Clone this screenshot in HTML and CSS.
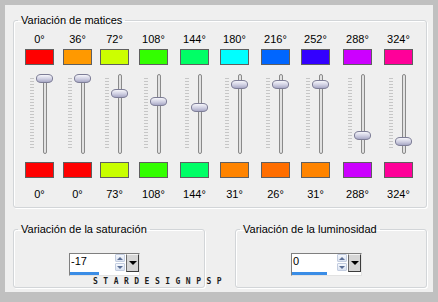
FILE: index.html
```html
<!DOCTYPE html>
<html lang="es">
<head>
    <meta charset="UTF-8">
    <title>Variación de matices</title>
    <link rel="stylesheet" href="styles.css">
</head>
<body>

    <div class="window">
        <div class="panel">

            <!-- Hue shift -->
            <fieldset class="group hue-group">
                <legend>Variación de matices</legend>
                <div class="hue-grid">
                    <div class="hue-col">
                        <span class="deg">0°</span>
                        <div class="swatch" style="background:#ff0000"></div>
                        <div class="slider"><div class="ticks"></div><div class="track"></div><div class="thumb" style="top:0px"></div></div>
                        <div class="swatch" style="background:#ff0000"></div>
                        <span class="deg">0°</span>
                    </div>
                    <div class="hue-col">
                        <span class="deg">36°</span>
                        <div class="swatch" style="background:#ff9900"></div>
                        <div class="slider"><div class="ticks"></div><div class="track"></div><div class="thumb" style="top:0px"></div></div>
                        <div class="swatch" style="background:#ff0000"></div>
                        <span class="deg">0°</span>
                    </div>
                    <div class="hue-col">
                        <span class="deg">72°</span>
                        <div class="swatch" style="background:#ccff00"></div>
                        <div class="slider"><div class="ticks"></div><div class="track"></div><div class="thumb" style="top:15px"></div></div>
                        <div class="swatch" style="background:#c8ff00"></div>
                        <span class="deg">73°</span>
                    </div>
                    <div class="hue-col">
                        <span class="deg">108°</span>
                        <div class="swatch" style="background:#33ff00"></div>
                        <div class="slider"><div class="ticks"></div><div class="track"></div><div class="thumb" style="top:23px"></div></div>
                        <div class="swatch" style="background:#33ff00"></div>
                        <span class="deg">108°</span>
                    </div>
                    <div class="hue-col">
                        <span class="deg">144°</span>
                        <div class="swatch" style="background:#00ff66"></div>
                        <div class="slider"><div class="ticks"></div><div class="track"></div><div class="thumb" style="top:29px"></div></div>
                        <div class="swatch" style="background:#00ff66"></div>
                        <span class="deg">144°</span>
                    </div>
                    <div class="hue-col">
                        <span class="deg">180°</span>
                        <div class="swatch" style="background:#00ffff"></div>
                        <div class="slider"><div class="ticks"></div><div class="track"></div><div class="thumb" style="top:6px"></div></div>
                        <div class="swatch" style="background:#ff8400"></div>
                        <span class="deg">31°</span>
                    </div>
                    <div class="hue-col">
                        <span class="deg">216°</span>
                        <div class="swatch" style="background:#0066ff"></div>
                        <div class="slider"><div class="ticks"></div><div class="track"></div><div class="thumb" style="top:6px"></div></div>
                        <div class="swatch" style="background:#ff6e00"></div>
                        <span class="deg">26°</span>
                    </div>
                    <div class="hue-col">
                        <span class="deg">252°</span>
                        <div class="swatch" style="background:#3300ff"></div>
                        <div class="slider"><div class="ticks"></div><div class="track"></div><div class="thumb" style="top:6px"></div></div>
                        <div class="swatch" style="background:#ff8400"></div>
                        <span class="deg">31°</span>
                    </div>
                    <div class="hue-col">
                        <span class="deg">288°</span>
                        <div class="swatch" style="background:#cc00ff"></div>
                        <div class="slider"><div class="ticks"></div><div class="track"></div><div class="thumb" style="top:57px"></div></div>
                        <div class="swatch" style="background:#cc00ff"></div>
                        <span class="deg">288°</span>
                    </div>
                    <div class="hue-col">
                        <span class="deg">324°</span>
                        <div class="swatch" style="background:#ff0099"></div>
                        <div class="slider"><div class="ticks"></div><div class="track"></div><div class="thumb" style="top:63px"></div></div>
                        <div class="swatch" style="background:#ff0099"></div>
                        <span class="deg">324°</span>
                    </div>
                </div>
            </fieldset>

            <!-- Saturation / lightness -->
            <div class="bottom-row">
                <fieldset class="group small-group">
                    <legend>Variación de la saturación</legend>
                    <div class="spin">
                        <div class="spin-row">
                            <span class="spin-value">-17</span>
                            <div class="spin-arrows">
                                <div class="arrow-btn"><span class="arrow-up"></span></div>
                                <div class="arrow-btn"><span class="arrow-down"></span></div>
                            </div>
                            <div class="drop-btn"><span class="drop-tri"></span></div>
                        </div>
                        <div class="spin-bar" style="width:29px"></div>
                    </div>
                </fieldset>
                <fieldset class="group small-group">
                    <legend>Variación de la luminosidad</legend>
                    <div class="spin">
                        <div class="spin-row">
                            <span class="spin-value">0</span>
                            <div class="spin-arrows">
                                <div class="arrow-btn"><span class="arrow-up"></span></div>
                                <div class="arrow-btn"><span class="arrow-down"></span></div>
                            </div>
                            <div class="drop-btn"><span class="drop-tri"></span></div>
                        </div>
                        <div class="spin-bar" style="width:35px"></div>
                    </div>
                </fieldset>
            </div>

        </div>
        <div class="watermark">STARDESIGNPSP</div>
    </div>

</body>
</html>
```

FILE: styles.css
```css
* {
    box-sizing: border-box;
}

body {
    margin: 0;
    font: 11px/13px "Liberation Sans", Arial, sans-serif;
    color: #000;
}

/* Window frame */
.window {
    position: relative;
    width: 438px;
    height: 302px;
    background: #c0c0c0;
    padding: 5px 5px 10px 5px;
}

.panel {
    height: 100%;
    background: #efefef;
    padding: 9px 5px 4px 8px;
}

/* Group boxes */
.group {
    margin: 0;
    border: 1px solid #d2d5d8;
    border-radius: 3px;
    box-shadow: inset 1px 1px 0 #fff, 1px 1px 0 #fff;
    min-width: 0;
}

.group legend {
    margin-left: 4px;
    padding: 0 3px;
    line-height: 13px;
    white-space: nowrap;
}

.hue-group {
    width: 414px;
    padding: 6px 0 6px 0;
}

.hue-grid {
    display: grid;
    grid-template-columns: 38px 37px 39px 41px 40px 41px 40px 42px 41px 40px;
    margin-left: 11px;
}

.hue-col {
    display: flex;
    flex-direction: column;
    align-items: flex-start;
}

.deg {
    width: 29px;
    text-align: center;
    white-space: nowrap;
    height: 13px;
}

.hue-col .deg:last-child {
    margin-top: 10px;
}

.swatch {
    width: 29px;
    height: 16px;
    border: 1px solid #5f5f5f;
    margin-top: 3px;
}

.slider + .swatch {
    margin-top: 8px;
}

/* Vertical slider */
.slider {
    position: relative;
    width: 29px;
    height: 80px;
    margin-top: 9px;
}

.ticks {
    position: absolute;
    left: 5px;
    top: 4px;
    width: 4px;
    height: 72px;
    background: repeating-linear-gradient(to bottom, #c6c6c6 0 1px, transparent 1px 3px);
}

.track {
    position: absolute;
    left: 18px;
    top: 0;
    width: 4px;
    height: 80px;
    border: 1px solid #8a8a8a;
    border-radius: 2px;
    background: #e2e2e2;
}

.thumb {
    position: absolute;
    left: 11px;
    width: 17px;
    height: 9px;
    border: 1px solid #7d7d96;
    border-radius: 5px / 4px;
    background: linear-gradient(#f6f6fb, #cfcfe2 55%, #a9a9c6);
}

/* Bottom groups */
.bottom-row {
    display: flex;
    gap: 30px;
    margin-top: 15px;
}

.small-group {
    width: 192px;
    padding: 17px 0 11px 0;
}

.spin {
    width: 71px;
    height: 23px;
    margin-left: 55px;
    background: #fff;
    border: 1px solid;
    border-color: #7f7f7f #e2e2e2 #e2e2e2 #7f7f7f;
}

.spin-row {
    display: flex;
    height: 18px;
}

.spin-value {
    width: 45px;
    padding-left: 1px;
    line-height: 14px;
}

.spin-arrows {
    width: 11px;
    display: flex;
    flex-direction: column;
    gap: 1px;
}

.arrow-btn {
    height: 8px;
    width: 10px;
    border: 1px solid #c3cde0;
    border-radius: 1px;
    background: linear-gradient(#f5f8fd, #dbe3f1);
    display: flex;
    align-items: center;
    justify-content: center;
}

.arrow-up {
    border-left: 3px solid transparent;
    border-right: 3px solid transparent;
    border-bottom: 3px solid #5b6f96;
}

.arrow-down {
    border-left: 3px solid transparent;
    border-right: 3px solid transparent;
    border-top: 3px solid #5b6f96;
}

.drop-btn {
    width: 13px;
    height: 18px;
    background: #d6d6d6;
    border: 1px solid;
    border-color: #f4f4f4 #3c3c3c #3c3c3c #6a6a6a;
    display: flex;
    align-items: center;
    justify-content: center;
}

.drop-tri {
    border-left: 4px solid transparent;
    border-right: 4px solid transparent;
    border-top: 4px solid #000;
}

.spin-bar {
    height: 3px;
    background: #3a8de6;
}

/* Watermark stamped over the dialog */
.watermark {
    position: absolute;
    left: 93px;
    top: 278px;
    font: bold 8px/8px "DejaVu Sans Mono", monospace;
    letter-spacing: 5.5px;
    color: #1e1e1e;
}
```
